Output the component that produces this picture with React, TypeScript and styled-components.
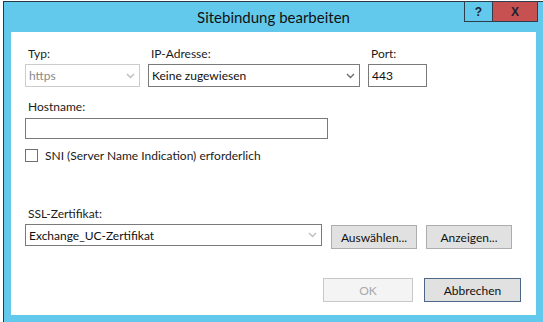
import React from "react";
import styled, { createGlobalStyle } from "styled-components";

const GlobalStyle = createGlobalStyle`
  html, body {
    margin: 0;
    padding: 0;
    background: #ffffff;
    overflow: hidden;
  }
  body {
    font-family: Lato, "Noto Sans", sans-serif;
    font-size: 12px;
    color: #1b1b1b;
  }
`;

const Desktop = styled.div`
  width: 543px;
  height: 322px;
  padding: 1px 0 0 3px;
  box-sizing: border-box;
  overflow: hidden;
`;

const Window = styled.div`
  width: 540px;
  height: 330px;
  box-sizing: border-box;
  background: #63c9ec;
  border-left: 1px solid #2a3a44;
  border-top: 1px solid #2a3a44;
  display: flex;
  flex-direction: column;
`;

const TitleBar = styled.div`
  height: 30px;
  display: grid;
  grid-template-columns: 1fr auto 1fr;
  align-items: start;
`;

const Title = styled.div`
  grid-column: 2;
  font-size: 15px;
  line-height: 20px;
  padding-top: 5px;
  color: #111;
`;

const Caption = styled.div`
  grid-column: 3;
  justify-self: end;
  display: flex;
  margin-top: -1px;
  margin-right: 5px;
`;

const CaptionButton = styled.div<{ $close?: boolean }>`
  width: ${p => (p.$close ? 45 : 29)}px;
  height: 21px;
  box-sizing: border-box;
  border: 1px solid #2c3e4c;
  border-left-width: ${p => (p.$close ? 0 : 1)}px;
  background: ${p => (p.$close ? "#c75050" : "#63c9ec")};
  display: flex;
  align-items: center;
  justify-content: center;
  font-family: "Liberation Sans", Arial, sans-serif;
  font-weight: bold;
  font-size: 12px;
  color: #1a2330;
`;

const Client = styled.div`
  margin: 0 7px;
  height: 283px;
  background: #ffffff;
  box-sizing: border-box;
  padding: 14px 15px 0 14px;
  display: flex;
  flex-direction: column;
`;

const TopGrid = styled.div`
  display: grid;
  grid-template-columns: 115px 212px 59px;
  column-gap: 8px;
  row-gap: 1px;
`;

const Label = styled.div<{ $gap?: number }>`
  height: 16px;
  line-height: 16px;
  padding-left: 3px;
  margin-bottom: ${p => p.$gap ?? 1}px;
  white-space: nowrap;
`;

const Field = styled.div<{ $disabled?: boolean; $width?: number; $height?: number }>`
  width: ${p => (p.$width ? `${p.$width}px` : "auto")};
  height: ${p => p.$height ?? 23}px;
  box-sizing: border-box;
  border: 1px solid ${p => (p.$disabled ? "#cccccc" : "#7a7a7a")};
  background: #ffffff;
  display: flex;
  align-items: center;
  padding: 0 4px 0 3px;
  color: ${p => (p.$disabled ? "#8a8a8a" : "#111")};
  white-space: nowrap;
`;

const FieldText = styled.span`
  flex: 1;
  overflow: hidden;
`;

const Chevron = ({ light }: { light?: boolean }) => (
  <svg width="9" height="6" viewBox="0 0 9 6">
    <polyline
      points="1,1 4.5,4.5 8,1"
      fill="none"
      stroke={light ? "#bdbdbd" : "#6d6d6d"}
      strokeWidth="1.4"
    />
  </svg>
);

const Section = styled.div<{ $top: number }>`
  margin-top: ${p => p.$top}px;
`;

const CheckRow = styled.label`
  display: flex;
  align-items: center;
  gap: 7px;
  margin-top: 10px;
  height: 13px;
`;

const CheckBox = styled.span`
  width: 13px;
  height: 13px;
  box-sizing: border-box;
  border: 1px solid #707070;
  background: #fff;
`;

const CertRow = styled.div`
  display: flex;
  align-items: flex-start;
`;

const Button = styled.div<{ $width: number; $variant?: "default" | "disabled" }>`
  width: ${p => p.$width}px;
  height: 24px;
  box-sizing: border-box;
  display: flex;
  align-items: center;
  justify-content: center;
  border: 1px solid
    ${p =>
      p.$variant === "default"
        ? "#4f6787"
        : p.$variant === "disabled"
        ? "#c8c8c8"
        : "#adadad"};
  background: ${p => (p.$variant === "disabled" ? "#f4f4f4" : "#e1e1e1")};
  color: ${p => (p.$variant === "disabled" ? "#a8a8a8" : "#111")};
`;

const CertButtons = styled.div`
  display: flex;
  gap: 9px;
  margin-left: 9px;
  margin-top: 1px;
`;

const Footer = styled.div`
  display: flex;
  justify-content: flex-end;
  gap: 11px;
  margin-top: 29px;
`;

const App: React.FC = () => {
  return (
    <>
      <GlobalStyle />
      <Desktop>
        <Window>
          <TitleBar>
            <Title>Sitebindung bearbeiten</Title>
            <Caption>
              <CaptionButton>?</CaptionButton>
              <CaptionButton $close>X</CaptionButton>
            </Caption>
          </TitleBar>
          <Client>
            <TopGrid>
              <Label>Typ:</Label>
              <Label>IP-Adresse:</Label>
              <Label>Port:</Label>
              <Field $disabled>
                <FieldText>https</FieldText>
                <Chevron light />
              </Field>
              <Field>
                <FieldText>Keine zugewiesen</FieldText>
                <Chevron />
              </Field>
              <Field>
                <FieldText>443</FieldText>
              </Field>
            </TopGrid>

            <Section $top={12}>
              <Label $gap={3}>Hostname:</Label>
              <Field $width={303} $height={21} />
            </Section>

            <CheckRow>
              <CheckBox />
              <span>SNI (Server Name Indication) erforderlich</span>
            </CheckRow>

            <Section $top={44}>
              <Label $gap={2}>SSL-Zertifikat:</Label>
              <CertRow>
                <Field $width={297} $height={22}>
                  <FieldText>Exchange_UC-Zertifikat</FieldText>
                  <Chevron light />
                </Field>
                <CertButtons>
                  <Button $width={86}>Auswählen...</Button>
                  <Button $width={86}>Anzeigen...</Button>
                </CertButtons>
              </CertRow>
            </Section>

            <Footer>
              <Button $width={90} $variant="disabled">OK</Button>
              <Button $width={97} $variant="default">Abbrechen</Button>
            </Footer>
          </Client>
        </Window>
      </Desktop>
    </>
  );
};

export default App;
